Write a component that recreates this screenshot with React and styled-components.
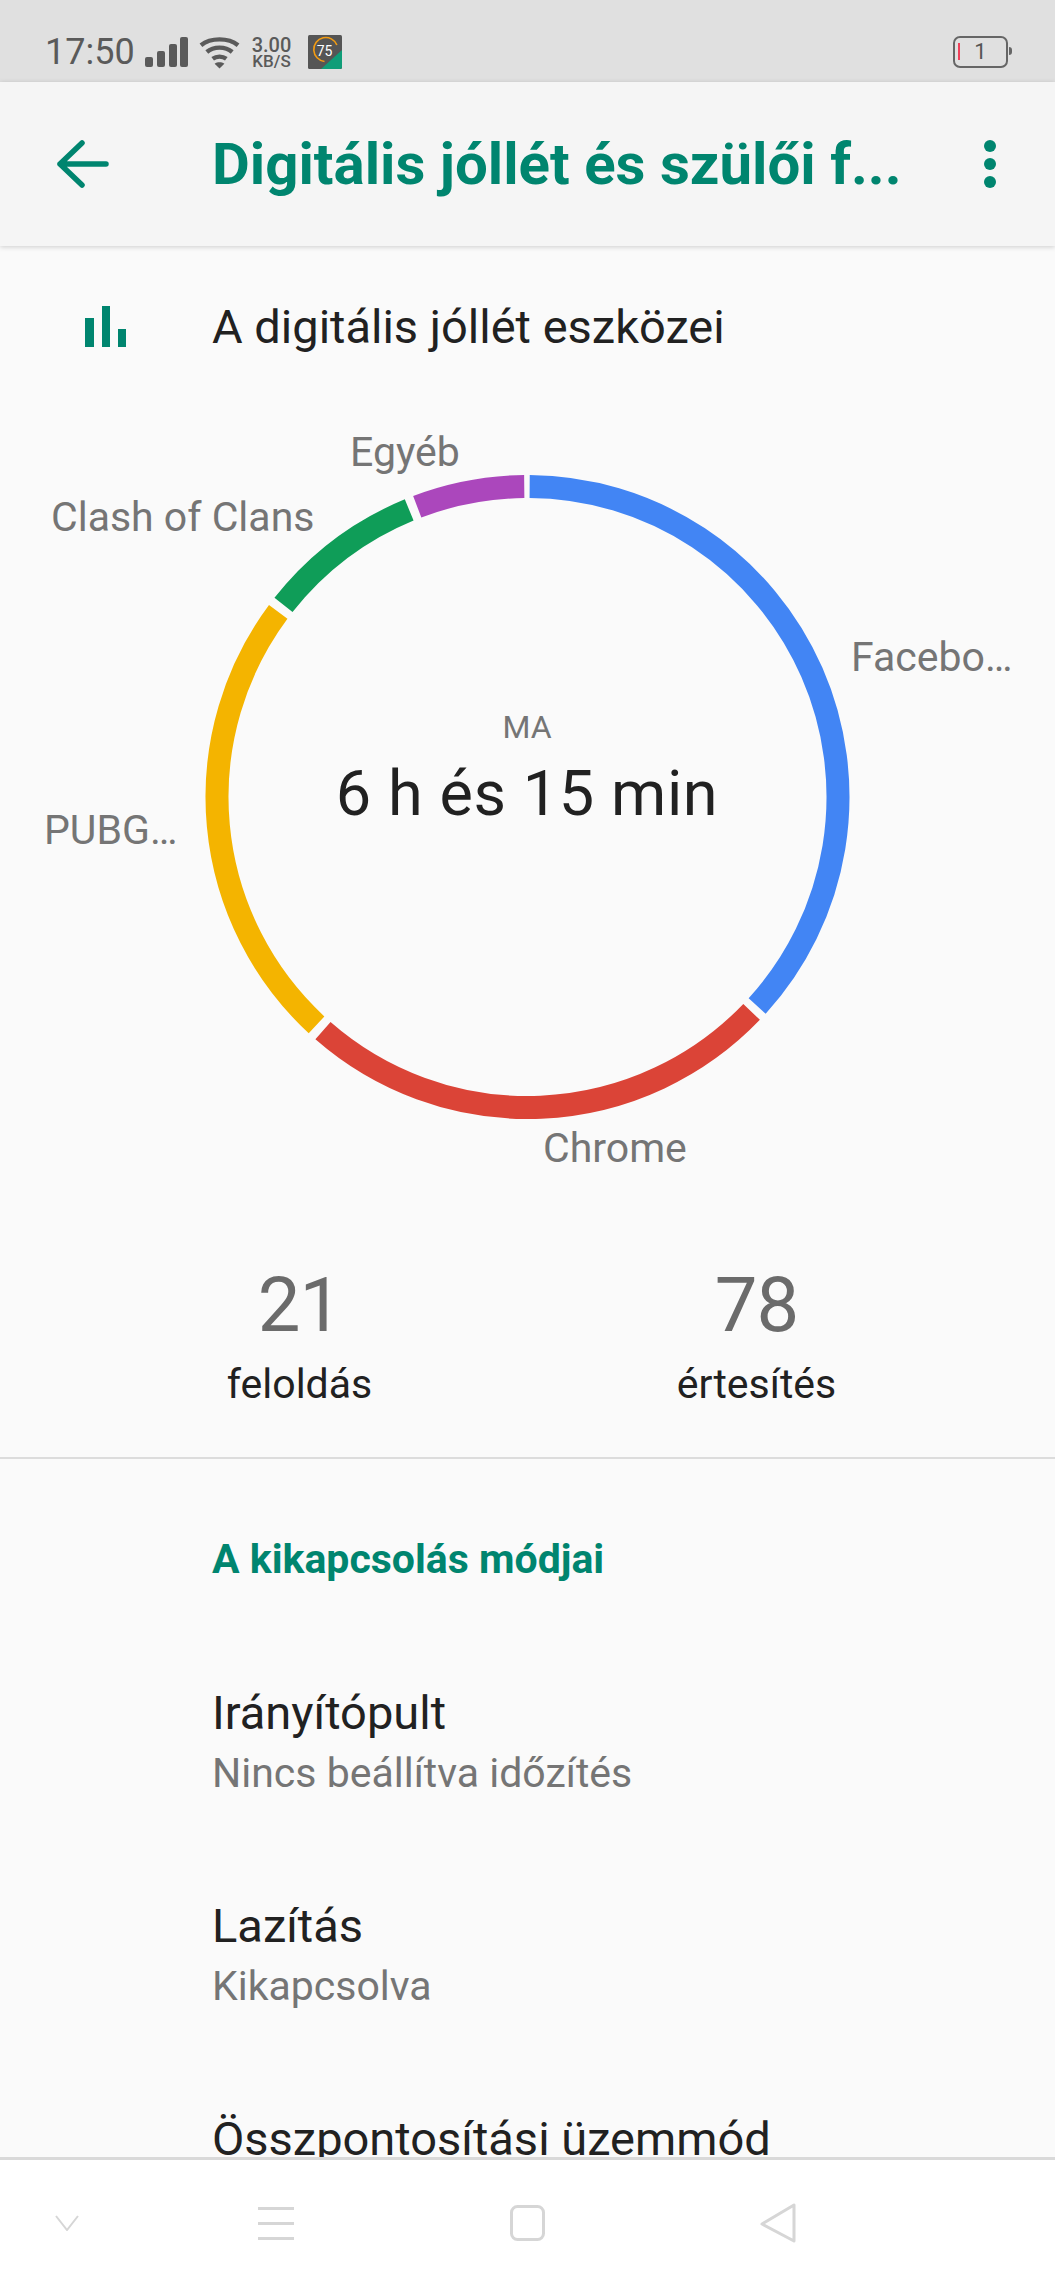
import React from 'react';
import styled, { createGlobalStyle } from 'styled-components';

const GlobalStyle = createGlobalStyle`
  html, body {
    margin: 0;
    padding: 0;
    background: #fafafa;
  }
  body {
    font-family: Roboto, "Liberation Sans", sans-serif;
  }
`;

const TEAL = '#00856f';

const Screen = styled.div`
  width: 1055px;
  height: 2286px;
  display: flex;
  flex-direction: column;
  overflow: hidden;
  background: #fafafa;
`;

const StatusBar = styled.div`
  flex: 0 0 82px;
  background: #e0e0e0;
  display: flex;
  align-items: center;
  padding: 22px 47px 0 45px;
  color: #5a5a5a;
  box-sizing: border-box;
`;

const Clock = styled.span`
  font-size: 36px;
  width: 88px;
  margin-right: 12px;
  line-height: 30px;
`;

const StatusIcons = styled.div`
  display: flex;
  align-items: center;
  gap: 11px;
`;

const Speed = styled.div`
  display: flex;
  flex-direction: column;
  font-size: 20px;
  line-height: 18px;
  font-weight: 500;
  width: 41px;
  margin-right: 5px;
  text-align: center;
  span:last-child {
    font-size: 17px;
    line-height: 15px;
  }
`;

const Battery = styled.div`
  margin-left: auto;
  position: relative;
  width: 55px;
  height: 32px;
  box-sizing: border-box;
  border: 2.5px solid #666;
  border-radius: 7px;
  font-size: 22px;
  line-height: 27px;
  text-align: center;
  color: #555;

  &::before {
    content: '';
    position: absolute;
    left: 3px;
    top: 5px;
    width: 1.5px;
    height: 17px;
    background: #f0405a;
  }
  &::after {
    content: '';
    position: absolute;
    right: -6px;
    top: 9px;
    width: 3px;
    height: 8px;
    border-radius: 0 3px 3px 0;
    background: #666;
  }
`;

const AppBar = styled.header`
  flex: 0 0 164px;
  background: #f5f5f5;
  display: flex;
  align-items: center;
  box-shadow: 0 1px 5px rgba(0, 0, 0, 0.18);
  position: relative;
  z-index: 1;
`;

const IconSlot = styled.div`
  flex: 0 0 212px;
  display: flex;
  align-items: center;
  padding-left: ${({ $left }) => $left}px;
  box-sizing: border-box;
`;

const Title = styled.h1`
  margin: 0;
  flex: 0 0 772px;
  font-size: 58.2px;
  font-weight: 700;
  color: ${TEAL};
  white-space: nowrap;
`;

const Dots = styled.div`
  display: flex;
  flex-direction: column;
  gap: 6px;
  i {
    width: 12px;
    height: 12px;
    border-radius: 50%;
    background: ${TEAL};
  }
`;

const Content = styled.main`
  flex: 1;
  min-height: 0;
  overflow: hidden;
`;

const ToolRow = styled.div`
  display: flex;
  align-items: center;
  height: 160px;
  font-size: 47px;
  color: #212121;
`;

const ChartWrap = styled.div`
  position: relative;
  height: 780px;
  margin-top: 69px;
`;

const ChartLabel = styled.span`
  position: absolute;
  left: ${({ $x }) => $x}px;
  top: ${({ $y }) => $y}px;
  font-size: 41px;
  line-height: 46px;
  color: #757575;
  white-space: nowrap;
`;

const ChartCentre = styled.div`
  position: absolute;
  left: 205px;
  top: 235px;
  width: 644px;
  text-align: center;
`;

const CentreSmall = styled.div`
  font-size: 32px;
  line-height: 34px;
  color: #757575;
`;

const CentreBig = styled.div`
  font-size: 63px;
  line-height: 76px;
  margin-top: 12px;
  letter-spacing: 0.6px;
  color: #212121;
`;

const Stats = styled.div`
  display: grid;
  grid-template-columns: 457px 457px;
  height: 204px;
  box-sizing: border-box;
  border-bottom: 2px solid #dcdcdc;
  padding-left: 71px;
`;

const Stat = styled.div`
  text-align: center;
`;

const StatValue = styled.div`
  font-size: 76px;
  line-height: 100px;
  letter-spacing: -1px;
  color: #6b6b6b;
`;

const StatLabel = styled.div`
  font-size: 41px;
  line-height: 46px;
  padding-top: 6px;
  color: #212121;
`;

const SectionTitle = styled.h2`
  margin: 0;
  padding: 77px 0 0 212px;
  font-size: 41px;
  line-height: 46px;
  font-weight: 700;
  color: ${TEAL};
`;

const SettingsList = styled.div`
  padding: 101px 0 0 212px;
  display: flex;
  flex-direction: column;
  gap: 93px;
`;

const Setting = styled.div``;

const SettingName = styled.div`
  font-size: 47px;
  line-height: 60px;
  color: #212121;
`;

const SettingHint = styled.div`
  font-size: 41px;
  line-height: 60px;
  color: #757575;
`;

const NavBar = styled.nav`
  flex: 0 0 129px;
  background: #fff;
  border-top: 3px solid #d9d9d9;
  box-sizing: border-box;
  position: relative;
  z-index: 1;
  display: grid;
  grid-template-columns: 134px 283px 221px 280px;
  align-items: center;
`;

const NavCell = styled.div`
  display: flex;
  justify-content: center;
`;

const segments = [
  { from: 0.4, to: 132.3, color: '#4285f4' },
  { from: 133.8, to: 221.2, color: '#db4437' },
  { from: 222.8, to: 306.6, color: '#f4b400' },
  { from: 308.2, to: 337.6, color: '#0f9d58' },
  { from: 339.2, to: 359.4, color: '#ab47bc' },
];

const CX = 527.5;
const CY = 322;
const R = 310.5;

const pointAt = (deg) => {
  const rad = (deg * Math.PI) / 180;
  return [CX + R * Math.sin(rad), CY - R * Math.cos(rad)];
};

const arcPath = (from, to) => {
  const [x1, y1] = pointAt(from);
  const [x2, y2] = pointAt(to);
  const large = to - from > 180 ? 1 : 0;
  return `M${x1} ${y1}A${R} ${R} 0 ${large} 1 ${x2} ${y2}`;
};

const RingSvg = styled.svg`
  position: absolute;
  left: 0;
  top: 0;
`;

const Ring = () => (
  <RingSvg width="1055" height="644" viewBox="0 0 1055 644">
    {segments.map((s) => (
      <path key={s.color} d={arcPath(s.from, s.to)} fill="none" stroke={s.color} strokeWidth="23" />
    ))}
  </RingSvg>
);

const Signal = () => (
  <svg width="43" height="30" viewBox="0 0 43 30" fill="#5a5a5a">
    <rect x="0" y="20" width="8" height="10" rx="2" />
    <rect x="12" y="14" width="8" height="16" rx="2" />
    <rect x="24" y="7" width="8" height="23" rx="2" />
    <rect x="35" y="0" width="8" height="30" rx="2" />
  </svg>
);

const Wifi = () => (
  <svg width="41" height="33" viewBox="0 0 42 33" fill="none" stroke="#5a5a5a" strokeWidth="4.5">
    <path d="M2 9C12 1 30 1 40 9" />
    <path d="M8 16C15 10 27 10 34 16" />
    <path d="M14 23C18 20 24 20 28 23" />
    <path d="M21 33l-5-5c3-2 7-2 10 0z" fill="#5a5a5a" stroke="none" />
  </svg>
);

const SpeedApp = () => (
  <svg width="34" height="34" viewBox="0 0 34 34">
    <rect width="34" height="34" rx="1.5" fill="#555" />
    <path d="M14 26A12 12 0 1 1 30 13" fill="none" stroke="#f39c12" strokeWidth="1.6" transform="rotate(-14 17 16)" />
    <path d="M13 34L34 15V32a2 2 0 0 1-2 2z" fill="#0f9d78" />
    <text x="16.5" y="21" fontSize="14" textAnchor="middle" fill="#fff" fontFamily="Roboto">75</text>
  </svg>
);

const BackArrow = () => (
  <svg width="52" height="48" viewBox="0 0 52 48" fill="none" stroke={TEAL} strokeWidth="5.5" strokeLinecap="round" strokeLinejoin="round">
    <path d="M3 24H49M25 3L3 24L25 45" />
  </svg>
);

const BarsIcon = () => (
  <svg width="41" height="41" viewBox="0 0 41 41" fill={TEAL}>
    <rect x="0" y="12" width="9" height="29" />
    <rect x="17" y="0" width="8" height="41" />
    <rect x="33" y="23" width="8" height="18" />
  </svg>
);

const App = () => (
  <Screen>
    <GlobalStyle />
    <StatusBar>
      <Clock>17:50</Clock>
      <StatusIcons>
        <Signal />
        <Wifi />
        <Speed>
          <span>3.00</span>
          <span>KB/S</span>
        </Speed>
        <SpeedApp />
      </StatusIcons>
      <Battery>1</Battery>
    </StatusBar>
    <AppBar>
      <IconSlot $left={57}>
        <BackArrow />
      </IconSlot>
      <Title>Digitális jóllét és szülői f...</Title>
      <Dots>
        <i />
        <i />
        <i />
      </Dots>
    </AppBar>
    <Content>
      <ToolRow>
        <IconSlot $left={85}>
          <BarsIcon />
        </IconSlot>
        A digitális jóllét eszközei
      </ToolRow>
      <ChartWrap>
        <Ring />
        <ChartLabel $x={350} $y={-46}>Egyéb</ChartLabel>
        <ChartLabel $x={51} $y={19}>Clash of Clans</ChartLabel>
        <ChartLabel $x={851} $y={159}>Facebo…</ChartLabel>
        <ChartLabel $x={44} $y={332}>PUBG…</ChartLabel>
        <ChartLabel $x={543} $y={650}>Chrome</ChartLabel>
        <ChartCentre>
          <CentreSmall>MA</CentreSmall>
          <CentreBig>6 h és 15 min</CentreBig>
        </ChartCentre>
      </ChartWrap>
      <Stats>
        <Stat>
          <StatValue>21</StatValue>
          <StatLabel>feloldás</StatLabel>
        </Stat>
        <Stat>
          <StatValue>78</StatValue>
          <StatLabel>értesítés</StatLabel>
        </Stat>
      </Stats>
      <SectionTitle>A kikapcsolás módjai</SectionTitle>
      <SettingsList>
        <Setting>
          <SettingName>Irányítópult</SettingName>
          <SettingHint>Nincs beállítva időzítés</SettingHint>
        </Setting>
        <Setting>
          <SettingName>Lazítás</SettingName>
          <SettingHint>Kikapcsolva</SettingHint>
        </Setting>
        <Setting>
          <SettingName>Összpontosítási üzemmód</SettingName>
        </Setting>
      </SettingsList>
    </Content>
    <NavBar>
      <NavCell>
        <svg width="24" height="16" viewBox="0 0 24 16" fill="none" stroke="#d6d6d6" strokeWidth="2">
          <path d="M1 1L12 15L23 1" />
        </svg>
      </NavCell>
      <NavCell>
        <svg width="36" height="33" viewBox="0 0 36 33" fill="#d6d6d6">
          <rect y="0" width="36" height="3" />
          <rect y="15" width="36" height="3" />
          <rect y="30" width="36" height="3" />
        </svg>
      </NavCell>
      <NavCell>
        <svg width="35" height="36" viewBox="0 0 35 36" fill="none" stroke="#d6d6d6" strokeWidth="3">
          <rect x="1.5" y="1.5" width="32" height="33" rx="6" />
        </svg>
      </NavCell>
      <NavCell>
        <svg width="36" height="40" viewBox="0 0 36 40" fill="none" stroke="#d6d6d6" strokeWidth="3" strokeLinejoin="round">
          <path d="M34 2V38L2 21Z" />
        </svg>
      </NavCell>
    </NavBar>
  </Screen>
);

export default App;
